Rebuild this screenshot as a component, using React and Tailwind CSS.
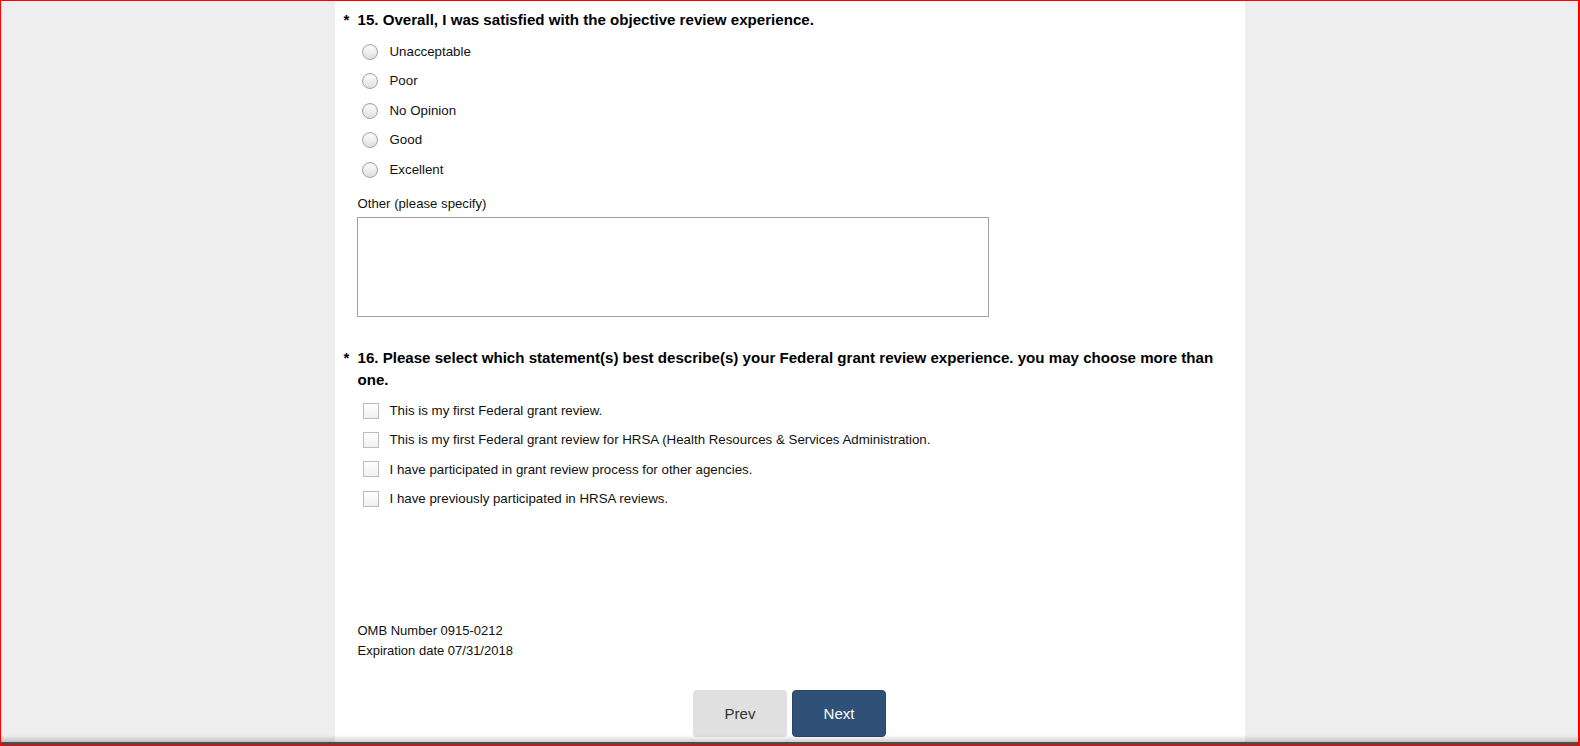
import React, { useState } from "react";

const ratings = ["Unacceptable", "Poor", "No Opinion", "Good", "Excellent"];

const statements = [
  "This is my first Federal grant review.",
  "This is my first Federal grant review for HRSA (Health Resources & Services Administration.",
  "I have participated in grant review process for other agencies.",
  "I have previously participated in HRSA reviews.",
];

function Radio({ checked, onClick }) {
  return (
    <span
      onClick={onClick}
      className="flex h-[16px] w-[16px] items-center justify-center rounded-full border border-[#a4a4a4] bg-gradient-to-b from-[#ffffff] to-[#dedede] shadow-[inset_0_1px_1px_rgba(0,0,0,0.08)]"
    >
      {checked && <span className="h-[6px] w-[6px] rounded-full bg-[#333]" />}
    </span>
  );
}

function Checkbox({ checked, onClick }) {
  return (
    <span
      onClick={onClick}
      className="flex h-[16px] w-[16px] items-center justify-center border border-[#bdbdbd] bg-gradient-to-b from-[#ffffff] to-[#f0f0f0] text-[11px] leading-none text-[#333]"
    >
      {checked ? "✓" : ""}
    </span>
  );
}

export default function App() {
  const [rating, setRating] = useState(null);
  const [picked, setPicked] = useState({});
  const [other, setOther] = useState("");

  const togglePick = (i) => setPicked({ ...picked, [i]: !picked[i] });

  return (
    <div
      className="relative h-[746px] w-[1580px] overflow-hidden border-t border-b border-l border-r-2 border-[#ff0000] bg-[#eeeeee] text-[#111]"
      style={{ fontFamily: '"Liberation Sans", Arial, sans-serif' }}
    >
      <div className="mx-auto h-full w-[910px] bg-white pl-[8px] pr-[8px] pt-[8px]">
        {/* ================= Q15 ================= */}
        <div className="flex text-[15.1px] font-bold leading-[22px] text-black">
          <span className="w-[15px] shrink-0 pl-[1px] text-[15px]">*</span>
          <span>15. Overall, I was satisfied with the objective review experience.</span>
        </div>

        <div className="mt-[6px] pl-[19px]">
          {ratings.map((r, i) => (
            <label
              key={r}
              className="flex h-[29.5px] cursor-pointer items-center text-[13.3px]"
            >
              <Radio checked={rating === i} onClick={() => setRating(i)} />
              <span className="ml-[12px]">{r}</span>
            </label>
          ))}
        </div>

        <div className="pl-[14px]">
          <p className="mt-[11px] pl-[1px] text-[13.2px] leading-[16px]">Other (please specify)</p>
          <textarea
            value={other}
            onChange={(e) => setOther(e.target.value)}
            className="mt-[5px] block h-[100px] w-[632px] resize-none border border-[#a0a0a0] bg-white p-1 text-[13px] outline-none"
          />
        </div>

        {/* ================= Q16 ================= */}
        <div className="mt-[30px] flex text-[15.1px] font-bold leading-[22px] text-black">
          <span className="w-[15px] shrink-0 pl-[1px] text-[15px]">*</span>
          <span>
            16. Please select which statement(s) best describe(s) your Federal grant review
            experience. you may choose more than one.
          </span>
        </div>

        <div className="mt-[6px] pl-[20px]">
          {statements.map((s, i) => (
            <label
              key={s}
              className="flex h-[29.2px] cursor-pointer items-center text-[13.3px]"
            >
              <Checkbox checked={!!picked[i]} onClick={() => togglePick(i)} />
              <span className="ml-[11px]">{s}</span>
            </label>
          ))}
        </div>

        {/* ================= Footer ================= */}
        <div className="mt-[108px] pl-[15px] text-[13px] leading-[20px]">
          <p>OMB Number 0915-0212</p>
          <p>Expiration date 07/31/2018</p>
        </div>

        <div className="mt-[29px] flex justify-center gap-[5px]">
          <button className="h-[47px] w-[94px] rounded-[4px] bg-[#e0e0e0] text-[15px] text-[#333]">
            Prev
          </button>
          <button className="h-[47px] w-[94px] rounded-[4px] border border-[#27456a] bg-[#2f5077] text-[15px] text-white">
            Next
          </button>
        </div>
      </div>

      {/* bottom window shadow */}
      <div className="pointer-events-none absolute bottom-0 left-0 right-0">
        <div className="h-[7px] bg-gradient-to-b from-[rgba(0,0,0,0)] to-[rgba(0,0,0,0.18)]" />
        <div className="h-[3px] bg-[#504e44]" />
      </div>
    </div>
  );
}
